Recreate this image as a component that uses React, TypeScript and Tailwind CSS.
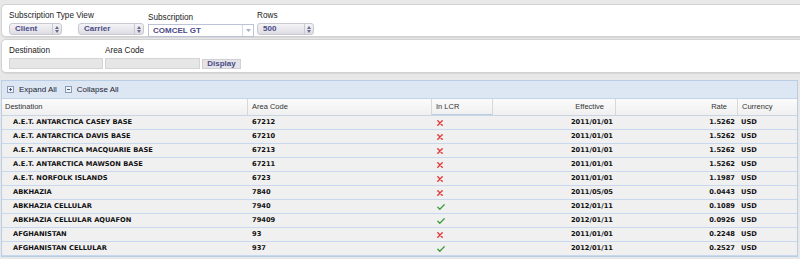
import React from 'react';

type Row = {
  dest: string;
  code: string;
  lcr: boolean;
  effective: string;
  rate: string;
  currency: string;
};

const rows: Row[] = [
  { dest: 'A.E.T. ANTARCTICA CASEY BASE', code: '67212', lcr: false, effective: '2011/01/01', rate: '1.5262', currency: 'USD' },
  { dest: 'A.E.T. ANTARCTICA DAVIS BASE', code: '67210', lcr: false, effective: '2011/01/01', rate: '1.5262', currency: 'USD' },
  { dest: 'A.E.T. ANTARCTICA MACQUARIE BASE', code: '67213', lcr: false, effective: '2011/01/01', rate: '1.5262', currency: 'USD' },
  { dest: 'A.E.T. ANTARCTICA MAWSON BASE', code: '67211', lcr: false, effective: '2011/01/01', rate: '1.5262', currency: 'USD' },
  { dest: 'A.E.T. NORFOLK ISLANDS', code: '6723', lcr: false, effective: '2011/01/01', rate: '1.1987', currency: 'USD' },
  { dest: 'ABKHAZIA', code: '7840', lcr: false, effective: '2011/05/05', rate: '0.0443', currency: 'USD' },
  { dest: 'ABKHAZIA CELLULAR', code: '7940', lcr: true, effective: '2012/01/11', rate: '0.1089', currency: 'USD' },
  { dest: 'ABKHAZIA CELLULAR AQUAFON', code: '79409', lcr: true, effective: '2012/01/11', rate: '0.0926', currency: 'USD' },
  { dest: 'AFGHANISTAN', code: '93', lcr: false, effective: '2011/01/01', rate: '0.2248', currency: 'USD' },
  { dest: 'AFGHANISTAN CELLULAR', code: '937', lcr: true, effective: '2012/01/11', rate: '0.2527', currency: 'USD' },
];

const cols = 'grid grid-cols-[246px_184px_61px_123px_122px_1fr]';

function Select({ value, width }: { value: string; width: string }) {
  return (
    <div className={`${width} h-[12px] flex items-center rounded-[3px] border border-[#c9c9d1] bg-gradient-to-b from-[#f4f4f7] to-[#dcdce3]`}>
      <span className="flex-1 pl-[5px] text-[8px] font-bold text-[#4b4b86] leading-none">{value}</span>
      <span className="w-[9px] h-full border-l border-[#c9c9d1] flex flex-col items-center justify-center gap-[1px]">
        <svg width="4" height="3" viewBox="0 0 4 3"><path d="M0 3 L2 0 L4 3 Z" fill="#6a6a8a" /></svg>
        <svg width="4" height="3" viewBox="0 0 4 3"><path d="M0 0 L2 3 L4 0 Z" fill="#6a6a8a" /></svg>
      </span>
    </div>
  );
}

function Cross() {
  return (
    <svg width="6" height="6" viewBox="0 0 6 6">
      <path d="M0.8 0.8 L5.2 5.2 M5.2 0.8 L0.8 5.2" stroke="#e23a3a" strokeWidth="1.4" strokeLinecap="round" />
    </svg>
  );
}

function Check() {
  return (
    <svg width="8" height="6" viewBox="0 0 8 6">
      <path d="M0.8 3.2 L2.8 5.2 L7.2 0.8" stroke="#3b9e3b" strokeWidth="1.3" fill="none" strokeLinecap="round" strokeLinejoin="round" />
    </svg>
  );
}

function BoxIcon({ plus }: { plus: boolean }) {
  return (
    <svg width="7" height="7" viewBox="0 0 7 7">
      <rect x="0.5" y="0.5" width="6" height="6" fill="#eef3fa" stroke="#8a9ab5" />
      <path d="M2 3.5 H5" stroke="#4a5a78" />
      {plus && <path d="M3.5 2 V5" stroke="#4a5a78" />}
    </svg>
  );
}

export default function App() {
  const label = "text-[8.2px] text-[#222] leading-none";
  return (
    <div className="w-[800px] h-[259px] overflow-hidden bg-[#e8e8e8] pt-[4px] font-['Liberation_Sans',sans-serif]">
      {/* Top filter panel */}
      <div className="ml-[1px] h-[33px] bg-white rounded-l-[5px] border-l border-y border-[#d2d2d2] shadow-[0_1px_1px_rgba(0,0,0,0.08)] flex items-start pl-[7px] pt-[7px]">
        <div className="flex flex-col gap-[3px]">
          <span className={label}>Subscription Type View</span>
          <div className="flex gap-[16px]">
            <Select value="Client" width="w-[53px]" />
            <Select value="Carrier" width="w-[66px]" />
          </div>
        </div>
        <div className="ml-[4px] mt-[2px] flex flex-col gap-[2px]">
          <span className={label}>Subscription</span>
          <div className="w-[106px] h-[13px] flex items-center border border-[#bcc3d6] bg-white">
            <span className="flex-1 pl-[4px] text-[8px] font-bold text-[#4b4b86] leading-none">COMCEL GT</span>
            <span className="w-[11px] h-full border-l border-[#d6dae6] flex items-center justify-center">
              <svg width="5" height="3" viewBox="0 0 5 3"><path d="M0 0 L2.5 3 L5 0 Z" fill="#a8b0c4" /></svg>
            </span>
          </div>
        </div>
        <div className="ml-[3px] flex flex-col gap-[3px]">
          <span className={label}>Rows</span>
          <Select value="500" width="w-[57px]" />
        </div>
      </div>

      {/* Destination panel */}
      <div className="ml-[1px] mt-[2px] h-[34px] bg-white rounded-l-[5px] border-l border-y border-[#d2d2d2] shadow-[0_1px_1px_rgba(0,0,0,0.08)] flex items-start pl-[7px] pt-[7px]">
        <div className="flex flex-col gap-[3px]">
          <span className={label}>Destination</span>
          <div className="w-[94px] h-[11px] bg-[#e6e6e6] border border-[#d4d4d4]" />
        </div>
        <div className="ml-[2px] flex flex-col gap-[3px]">
          <span className={label}>Area Code</span>
          <div className="w-[95px] h-[11px] bg-[#e6e6e6] border border-[#d4d4d4]" />
        </div>
        <div className="ml-[2px] mt-[12px] w-[39px] h-[10px] bg-[#e4e4e8] border border-[#d0d0d6] flex items-center justify-center text-[8px] font-bold text-[#4b4b86] leading-none">
          Display
        </div>
      </div>

      {/* Grid */}
      <div className="ml-[1px] mr-[2px] mt-[7px] border border-[#b9cde5] bg-[#f0f0f0]">
        <div className="h-[18px] bg-[#dde7f4] border-b border-[#c3d3e8] flex items-center pl-[5px] text-[8px] text-[#223] leading-none">
          <BoxIcon plus />
          <span className="ml-[5px]">Expand All</span>
          <span className="ml-[8px]"><BoxIcon plus={false} /></span>
          <span className="ml-[5px]">Collapse All</span>
        </div>
        <div className={`${cols} h-[17px] bg-gradient-to-b from-[#fbfbfb] to-[#f0f0f0] border-b border-[#c9d5e4] text-[7.5px] text-[#333] leading-none`}>
          <div className="flex items-center pl-[3px] border-r border-[#d8d8d8]">Destination</div>
          <div className="flex items-center pl-[4px] border-r border-[#d8d8d8]">Area Code</div>
          <div className="flex items-center pl-[4px] border-r border-[#d8d8d8] border-b border-b-[#b9cde5]">In LCR</div>
          <div className="flex items-center justify-end pr-[11px] border-r border-[#d8d8d8]">Effective</div>
          <div className="flex items-center justify-end pr-[10px] border-r border-[#d8d8d8]">Rate</div>
          <div className="flex items-center pl-[4px]">Currency</div>
        </div>
        {rows.map((r, i) => (
          <div key={i} className={`${cols} h-[14px] border-b border-[#c8d8ee] text-[6.7px] font-bold text-[#111] leading-none font-['DejaVu_Sans',sans-serif]`}>
            <div className="flex items-center pl-[11px]">{r.dest}</div>
            <div className="flex items-center pl-[4px]">{r.code}</div>
            <div className="flex items-center pl-[5px]">{r.lcr ? <Check /> : <Cross />}</div>
            <div className="flex items-center justify-end pr-[3px]">{r.effective}</div>
            <div className="flex items-center justify-end pr-[3px]">{r.rate}</div>
            <div className="flex items-center pl-[3px]">{r.currency}</div>
          </div>
        ))}
      </div>
    </div>
  );
}
